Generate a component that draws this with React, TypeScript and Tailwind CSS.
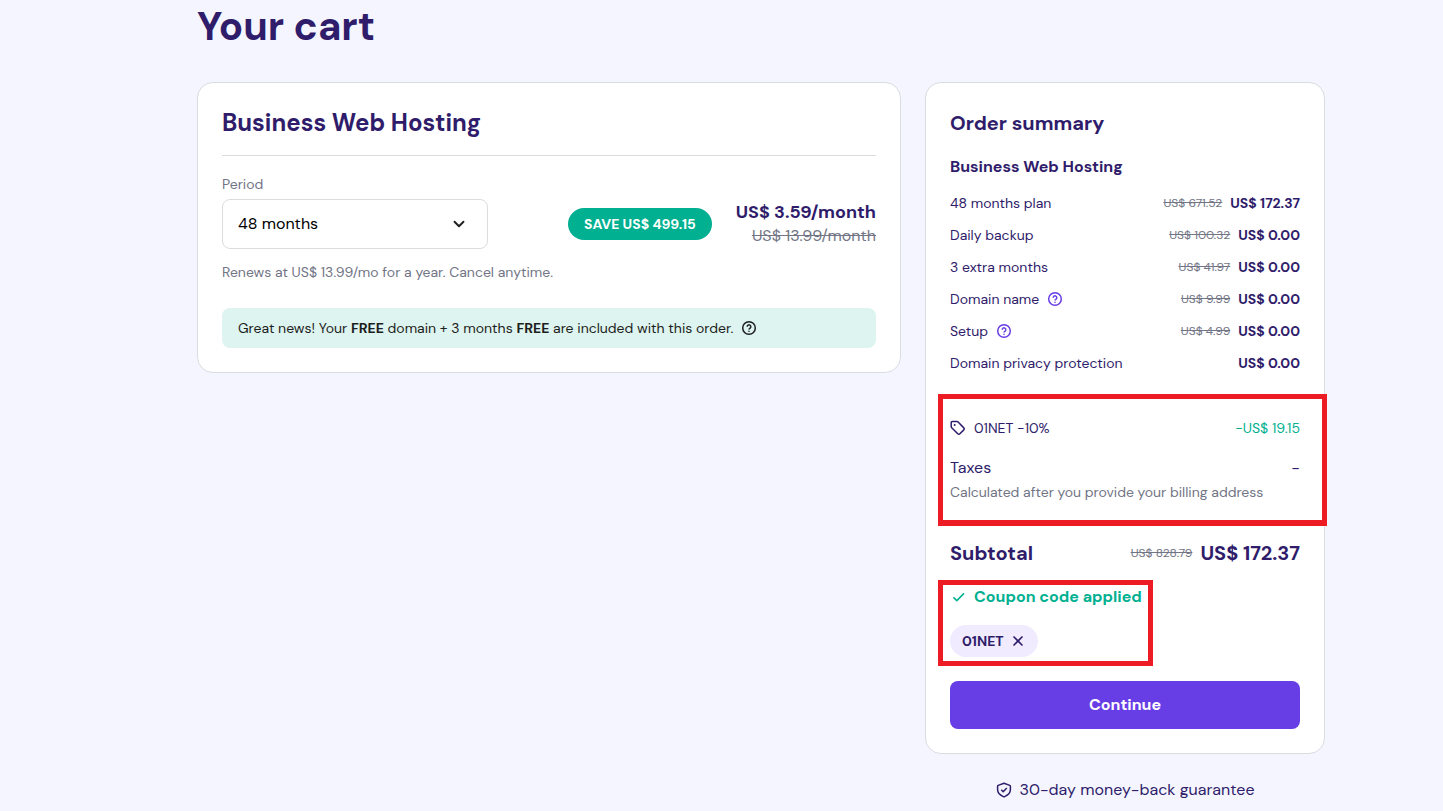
import { ChevronDown, X } from 'lucide-react';

type SummaryItem = {
  label: string;
  oldPrice?: string;
  price: string;
  hasHelp?: boolean;
};

const summaryItems: SummaryItem[] = [
  { label: '48 months plan', oldPrice: 'US$ 671.52', price: 'US$ 172.37' },
  { label: 'Daily backup', oldPrice: 'US$ 100.32', price: 'US$ 0.00' },
  { label: '3 extra months', oldPrice: 'US$ 41.97', price: 'US$ 0.00' },
  { label: 'Domain name', oldPrice: 'US$ 9.99', price: 'US$ 0.00', hasHelp: true },
  { label: 'Setup', oldPrice: 'US$ 4.99', price: 'US$ 0.00', hasHelp: true },
  { label: 'Domain privacy protection', price: 'US$ 0.00' },
];

const HelpIcon = () => (
  <svg viewBox="0 0 16 16" fill="none" stroke="currentColor" strokeWidth="1.5" className="size-4">
    <circle cx="8" cy="8" r="6.3" />
    <path d="M6.2 6.7a1.8 1.8 0 1 1 2.9 1.4c-.7.5-1.1.8-1.1 1.5" />
    <circle cx="8" cy="11.2" r="0.8" fill="currentColor" stroke="none" />
  </svg>
);

const TagIcon = () => (
  <svg viewBox="0 0 16 16" fill="none" stroke="currentColor" strokeWidth="1.5" strokeLinejoin="round" className="size-4">
    <path d="M1.2 2.6v3.9c0 .5.2.9.5 1.2l6.1 6.1c.6.6 1.5.6 2.1 0l3.9-3.9c.6-.6.6-1.4 0-2L8.6 2.5c-.5-.6-1-.9-1.8-.9H2.3c-.6 0-1.1.4-1.1 1z" />
    <circle cx="4.7" cy="5" r="1" fill="currentColor" stroke="none" />
  </svg>
);

const CheckIcon = () => (
  <svg viewBox="0 0 16 16" fill="none" stroke="currentColor" strokeWidth="1.5" className="size-4">
    <path d="M3.5 8.4 6.8 11.6 14 4.4" />
  </svg>
);

const GuaranteeIcon = () => (
  <svg viewBox="0 0 16 16" fill="none" stroke="currentColor" strokeWidth="1.5" strokeLinejoin="round" className="size-4">
    <path d="M8 1.3 2.2 3.4a.9.9 0 0 0-.6.9v3.3c0 3.3 2.5 5.7 5.7 7 .5.2.9.2 1.4 0 3.2-1.3 5.7-3.7 5.7-7V4.3c0-.4-.2-.8-.6-.9z" />
    <path d="M5.3 7.8 7.2 9.7 10.8 6" />
  </svg>
);

const PlanCard = () => (
  <section className="min-w-0 flex-1 rounded-2xl border border-[#dadce0] bg-white p-6">
    <h2 className="border-b border-[#dadce0] pb-4 text-2xl leading-8 font-bold">Business Web Hosting</h2>

    <label htmlFor="period" className="mt-4 block text-sm leading-6 text-[#727586]">
      Period
    </label>
    <div className="mt-[3px] flex items-center">
      <div className="relative w-[266px]">
        <select
          id="period"
          className="h-[50px] w-full appearance-none rounded-lg border border-[#dadce0] bg-white px-[15px] text-base text-black"
        >
          <option>48 months</option>
        </select>
        <ChevronDown className="pointer-events-none absolute top-4 right-5 size-[18px] text-[#1d1e20]" strokeWidth={2.5} />
      </div>
      <span className="ml-auto flex h-8 items-center rounded-full bg-[#00b090] px-4 text-sm font-bold text-white">
        SAVE US$ 499.15
      </span>
      <div className="ml-6 text-right leading-6">
        <p className="text-lg leading-6 font-bold">US$ 3.59/month</p>
        <p className="text-base leading-6 text-[#727586] line-through">US$ 13.99/month</p>
      </div>
    </div>
    <p className="mt-[11px] text-sm leading-6 text-[#727586]">Renews at US$ 13.99/mo for a year. Cancel anytime.</p>

    <div className="mt-6 flex h-10 items-center gap-2 rounded-lg bg-[#def4f0] px-4 text-sm text-[#1d1e20]">
      <p>
        Great news! Your <strong>FREE</strong> domain + 3 months <strong>FREE</strong> are included with this order.
      </p>
      <button type="button" aria-label="More about the offer">
        <HelpIcon />
      </button>
    </div>
  </section>
);

const OrderSummary = () => (
  <section className="rounded-2xl border border-[#dadce0] bg-white p-6">
    <h2 className="text-xl leading-8 font-bold">Order summary</h2>
    <h3 className="mt-4 text-base leading-6 font-bold">Business Web Hosting</h3>

    <ul className="mt-3 space-y-2 text-sm leading-6">
      {summaryItems.map((item) => (
        <li key={item.label} className="flex items-center">
          <span>{item.label}</span>
          {item.hasHelp && (
            <button type="button" aria-label={`About ${item.label}`} className="ml-2 text-[#673de6]">
              <HelpIcon />
            </button>
          )}
          {item.oldPrice && <s className="ml-auto text-xs leading-6 text-[#727586]">{item.oldPrice}</s>}
          <span className={item.oldPrice ? 'ml-2 font-bold' : 'ml-auto font-bold'}>{item.price}</span>
        </li>
      ))}
    </ul>

    <div className="relative mt-5 border-y border-[#dadce0] pt-5 pb-4">
      <div className="flex items-center gap-2 text-sm leading-6">
        <TagIcon />
        <span>01NET -10%</span>
        <span className="ml-auto text-[#00b090]">-US$ 19.15</span>
      </div>
      <div className="mt-4 flex justify-between text-base leading-6">
        <span>Taxes</span>
        <span>-</span>
      </div>
      <p className="text-sm leading-6 text-[#727586]">Calculated after you provide your billing address</p>
      {/* highlight frame */}
      <div className="pointer-events-none absolute -top-[2px] -right-[27px] -bottom-[6px] -left-3 border-[5px] border-b-[6px] border-[#ed1c24]" />
    </div>

    <div className="mt-4 flex items-center text-xl leading-8 font-bold">
      <span>Subtotal</span>
      <s className="ml-auto text-xs font-normal text-[#727586]">US$ 828.79</s>
      <span className="ml-2">US$ 172.37</span>
    </div>

    <div className="relative mt-4">
      <p className="flex items-center gap-2 text-base leading-6 font-bold text-[#00b090]">
        <CheckIcon />
        Coupon code applied
      </p>
      <div className="mt-4 inline-flex h-8 items-center gap-1.5 rounded-full bg-[#f0ebff] px-3 align-top text-sm font-bold">
        01NET
        <button type="button" aria-label="Remove coupon 01NET">
          <X className="size-4" strokeWidth={2.5} />
        </button>
      </div>
      {/* highlight frame */}
      <div className="pointer-events-none absolute -top-[5px] -bottom-[9px] -left-3 w-[215px] border-[5px] border-[#ed1c24]" />
    </div>

    <button type="button" className="mt-6 block h-12 w-full rounded-lg bg-[#673de6] text-base font-bold text-white">
      Continue
    </button>
  </section>
);

export default function App() {
  return (
    <main className="min-h-screen bg-[#f4f5ff] pt-0.5 pr-[118px] pl-[197px] font-['DM_Sans','Inter',sans-serif] text-[#2f1c6a]">
      <h1 className="mb-8 text-[40px] leading-12 font-bold">Your cart</h1>
      <div className="flex items-start gap-6">
        <PlanCard />
        <aside className="w-[400px] shrink-0">
          <OrderSummary />
          <p className="mt-6 flex items-center justify-center gap-2 text-base leading-6">
            <GuaranteeIcon />
            30-day money-back guarantee
          </p>
        </aside>
      </div>
    </main>
  );
}
